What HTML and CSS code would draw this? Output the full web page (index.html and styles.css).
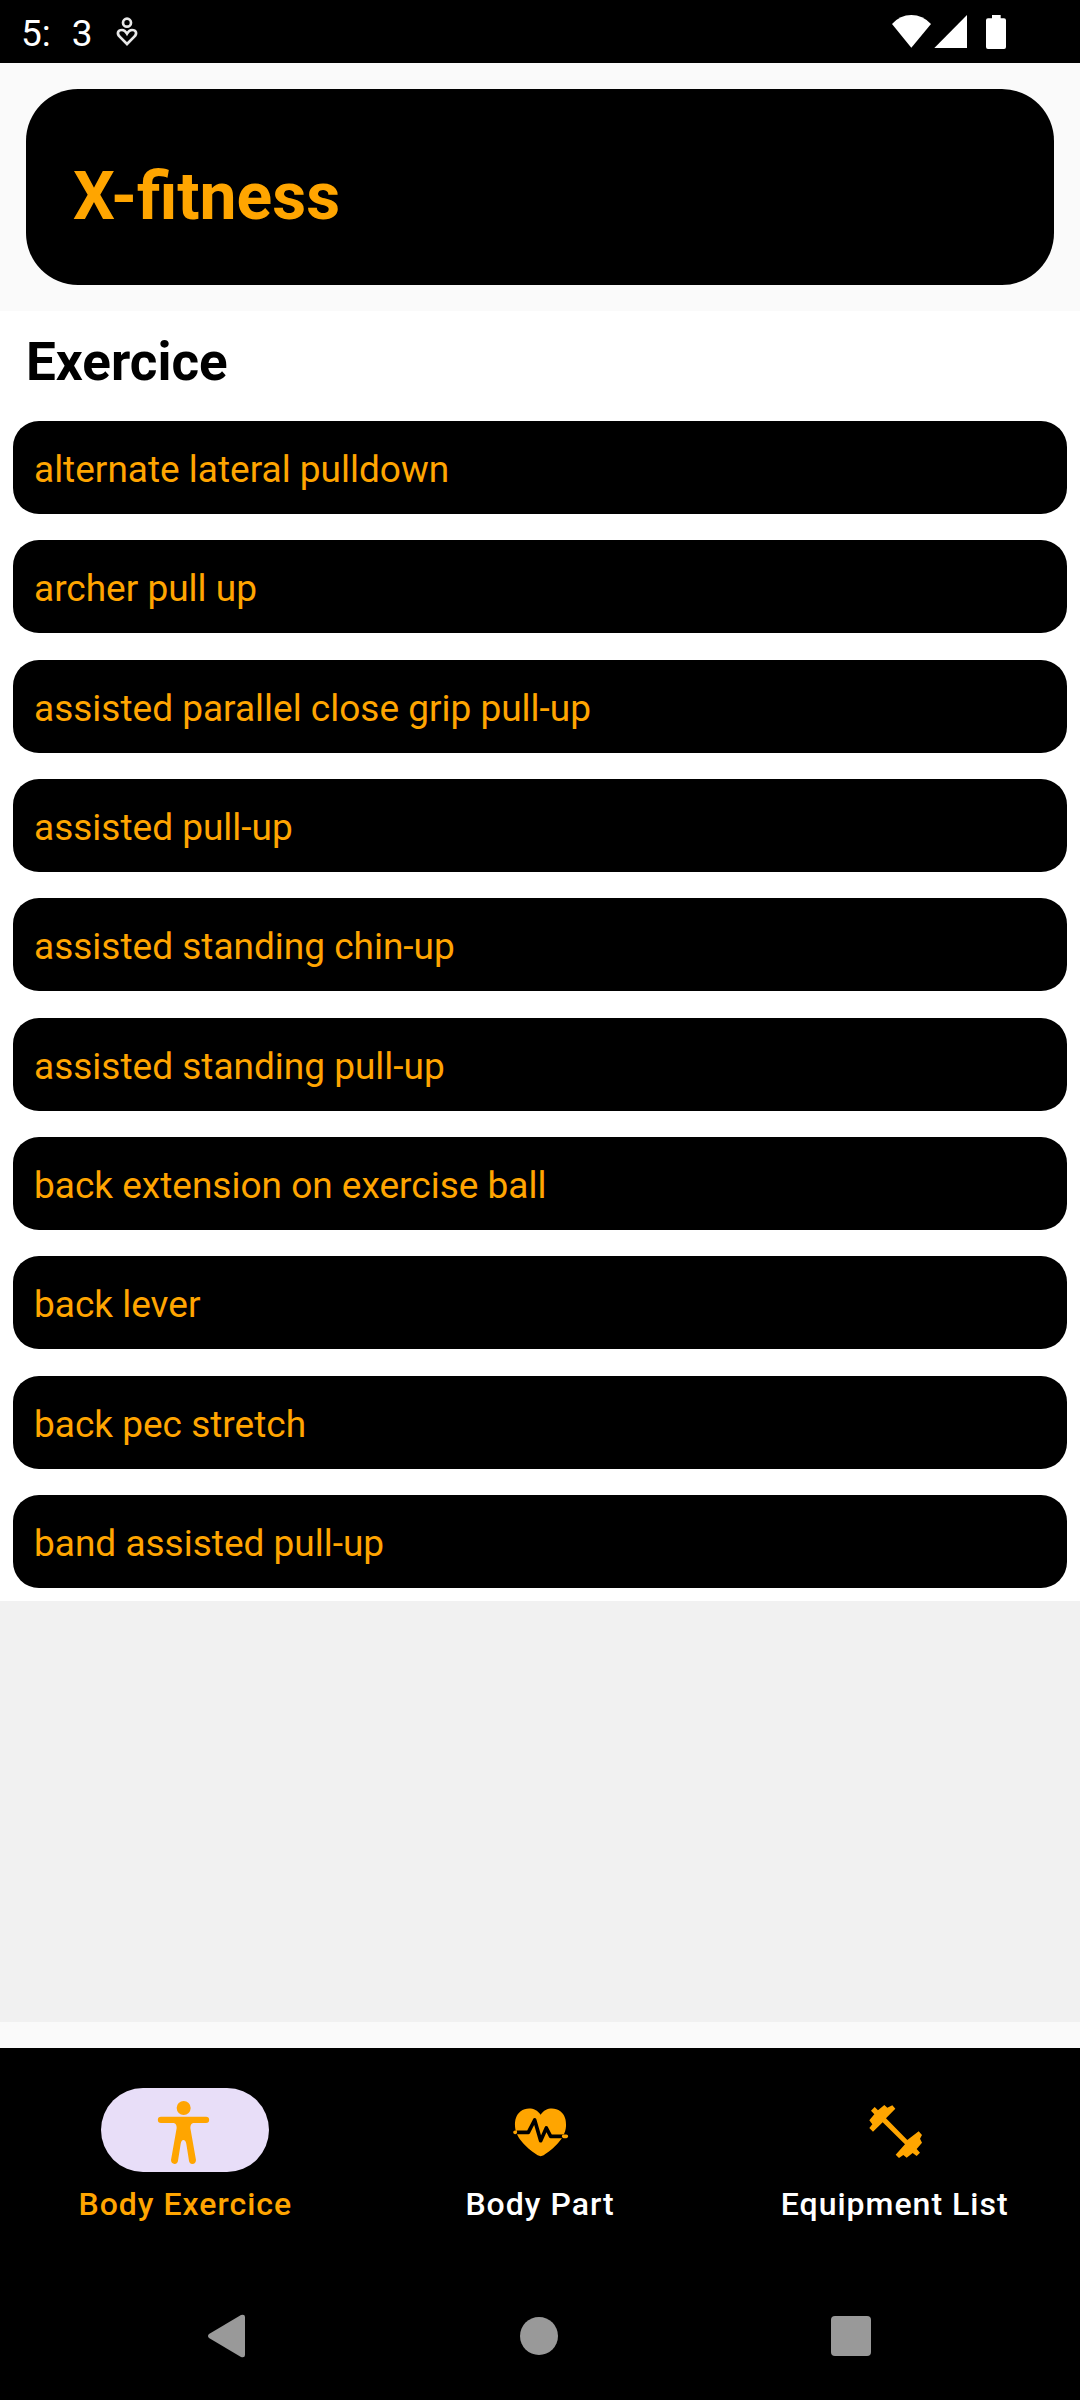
FILE: index.html
```html
<!DOCTYPE html>
<html lang="en">
<head>
<meta charset="utf-8">
<meta name="viewport" content="width=device-width, initial-scale=1">
<title>X-fitness</title>
<link rel="stylesheet" href="styles.css">
</head>
<body>
<div class="status-bar">
  <div class="status-left">
    <span class="clock"><span>5:</span><span>3</span></span>
    <svg class="status-app" viewBox="345 48 72 96" fill="none" stroke="#e8e8e8" stroke-width="8" aria-hidden="true">
      <circle cx="381" cy="68" r="12"/>
      <path d="M381 132L359 110C350 101 353 90 366 90C374 90 378 96 381 101C384 96 388 90 396 90C409 90 412 101 403 110Z"/>
    </svg>
  </div>
  <svg class="status-icons" viewBox="90 36 354 114" fill="#fff" aria-hidden="true">
    <path d="M96 69Q120 42 154 42Q188 42 213 69L154 140Z"/>
    <path d="M223 141L321 42V141Z"/>
    <path d="M396 42H422V52H432Q438 52 438 58V138Q438 144 432 144H384Q378 144 378 138V58Q378 52 384 52H396Z"/>
  </svg>
</div>
<header class="header">
  <div class="header-card"><h1 class="title">X-fitness</h1></div>
</header>
<main class="content">
  <section class="exercises">
    <h2 class="heading">Exercice</h2>
    <ul class="list">
      <li><button class="item" type="button">alternate lateral pulldown</button></li>
      <li><button class="item" type="button">archer pull up</button></li>
      <li><button class="item" type="button">assisted parallel close grip pull-up</button></li>
      <li><button class="item" type="button">assisted pull-up</button></li>
      <li><button class="item" type="button">assisted standing chin-up</button></li>
      <li><button class="item" type="button">assisted standing pull-up</button></li>
      <li><button class="item" type="button">back extension on exercise ball</button></li>
      <li><button class="item" type="button">back lever</button></li>
      <li><button class="item" type="button">back pec stretch</button></li>
      <li><button class="item" type="button">band assisted pull-up</button></li>
    </ul>
  </section>
</main>
<footer class="footer">
  <nav class="tabs">
    <a class="tab tab-active" href="#exercise" aria-current="page">
      <svg class="tab-icon" viewBox="123 84 504 252" fill="#ffa500" aria-hidden="true">
        <circle cx="371" cy="144" r="21"/>
        <path d="M303 170H438A9.500 9.500 0 0 1 438 189H400Q391 191 391 204L408 300Q407 312 397 312Q388 311 387 302L379 252Q377 240 370 240Q364 240 362 252L354 302Q353 311 344 312Q333 311 333 300L350 204Q350 191 341 189H303A9.500 9.500 0 0 1 303 170Z"/>
      </svg>
      <span>Body Exercice</span>
    </a>
    <a class="tab" href="#part">
      <svg class="tab-icon" viewBox="48 84 504 252" fill="none" stroke-linejoin="round" aria-hidden="true">
        <path fill="#ffa500" d="M302 164C287 142 259 141 242 154C228 165 224 181 225 199C227 237 266 268 293 286Q302 291 311 286C338 268 376 237 378 199C379 181 375 165 361 154C344 141 316 142 302 164Z"/>
        <path stroke="#000" stroke-width="11" d="M230 217H265L284 180L302 242L319 204L332 229H372"/>
        <path stroke="#ffa500" stroke-width="11" stroke-linecap="round" d="M225 217H226M371 229H379"/>
      </svg>
      <span>Body Part</span>
    </a>
    <a class="tab" href="#equipment">
      <svg class="tab-icon" viewBox="153 84 504 252" fill="#ffa500" aria-hidden="true">
        <path d="M344 141L354 151L373 135L382 143L397 136L406 146L378 175L442 240L476 214L486 225L480 236L486 248L470 267L480 278L470 288L458 279L440 293L430 285L417 294L407 284L435 253L368 187L339 215L328 204L337 193L328 181L343 163L333 152Z"/>
      </svg>
      <span>Equipment List</span>
    </a>
  </nav>
  <div class="system-nav">
    <button class="system-button" type="button" aria-label="Back">
      <svg viewBox="0 0 44 44" fill="#999"><path d="M4 20L36 1Q40 0 40 3V41Q40 44 36 43L4 24Q2 22 4 20Z"/></svg>
    </button>
    <button class="system-button" type="button" aria-label="Home">
      <svg viewBox="0 0 44 44" fill="#999"><circle cx="22" cy="22" r="19"/></svg>
    </button>
    <button class="system-button" type="button" aria-label="Recent apps">
      <svg viewBox="0 0 44 44" fill="#999"><rect x="2" y="2" width="40" height="40" rx="4"/></svg>
    </button>
  </div>
</footer>
</body>
</html>
```
FILE: styles.css
```css
* {
  box-sizing: border-box;
}

body {
  margin: 0;
  min-height: 100vh;
  display: flex;
  flex-direction: column;
  background: #fafafa;
  font-family: Roboto, "Liberation Sans", sans-serif;
}

svg {
  display: block;
}

.status-bar {
  display: flex;
  justify-content: space-between;
  align-items: center;
  padding: 0 72px 0 21px;
  height: 63px;
  background: #000;
  color: #fff;
}

.status-left {
  display: flex;
  align-items: center;
  gap: 22px;
}

.clock {
  display: flex;
  gap: 21px;
  padding-top: 4px;
  font-size: 37px;
  line-height: 44px;
}

.status-app {
  width: 24px;
  height: 32px;
}

.status-icons {
  width: 118px;
  height: 38px;
}

.header {
  padding: 26px;
}

.header-card {
  padding: 68px 47px 48px;
  border-radius: 52px;
  background: #000;
}

.title {
  margin: 0;
  color: #ffa500;
  font-size: 66px;
  line-height: 80px;
  font-weight: 700;
}

.content {
  flex: 1;
  margin-bottom: 26px;
  background: #f1f1f1;
}

.exercises {
  padding: 19px 13px 13px;
  background: #fff;
}

.heading {
  margin: 0 0 27px;
  padding-left: 13px;
  color: #000;
  font-size: 53px;
  line-height: 64px;
  font-weight: 700;
}

.list {
  display: flex;
  flex-direction: column;
  justify-content: space-between;
  min-height: 1167px;
  margin: 0;
  padding: 0;
  list-style: none;
}

.item {
  display: block;
  width: 100%;
  padding: 27px 21px 22px;
  border: 0;
  border-radius: 26px;
  background: #000;
  color: #ffa500;
  font: inherit;
  font-size: 37px;
  line-height: 44px;
  text-align: left;
}

.footer {
  background: #000;
}

.tabs {
  display: flex;
  padding: 40px 8px 48px;
}

.tab {
  flex: 1 1 0;
  display: flex;
  flex-direction: column;
  align-items: center;
  gap: 12px;
  color: #fff;
  font-size: 32px;
  line-height: 40px;
  font-weight: 500;
  letter-spacing: 1px;
  text-decoration: none;
}

.tab-active {
  color: #ffa500;
}

.tab-icon {
  width: 168px;
  height: 84px;
  border-radius: 42px;
}

.tab-active .tab-icon {
  background: #e8def8;
}

.system-nav {
  display: flex;
  justify-content: space-between;
  align-items: center;
  padding: 0 207px 0 205px;
  height: 128px;
}

.system-button {
  padding: 0;
  border: 0;
  background: none;
}

.system-button svg {
  width: 44px;
  height: 44px;
}
```
